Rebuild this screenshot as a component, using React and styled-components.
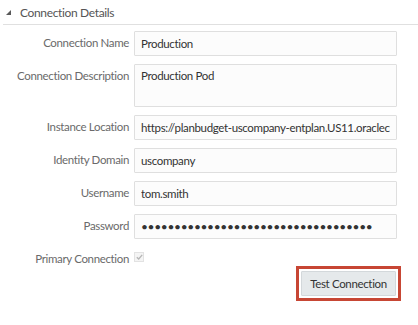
import React from 'react';
import styled, { createGlobalStyle } from 'styled-components';

const GlobalStyle = createGlobalStyle`
  html, body {
    margin: 0;
    padding: 0;
    background: #fff;
  }
  body {
    font-family: Lato, "Liberation Sans", sans-serif;
    font-size: 11.5px;
    letter-spacing: -0.35px;
  }
`;

const Panel = styled.div`
  width: 418px;
  height: 325px;
  overflow: hidden;
`;

const SectionHeader = styled.div`
  display: flex;
  align-items: center;
  gap: 9px;
  height: 25px;
  margin-left: 3px;
  padding-left: 3px;
  border-bottom: 1px solid #e0e0e0;
  color: #555;
  font-size: 12px;
  box-sizing: border-box;
`;

const Caret = styled.span`
  display: inline-block;
  width: 0;
  height: 0;
  border-left: 5px solid transparent;
  border-bottom: 5px solid #595959;
  margin-top: 1px;
`;

const Form = styled.div`
  display: grid;
  grid-template-columns: 129px 263px;
  column-gap: 5px;
  row-gap: 8px;
  margin-top: 6px;
`;

const Label = styled.label`
  text-align: right;
  color: #6a6a6a;
  line-height: ${(p) => (p.$short ? '20px' : '24px')};
  white-space: nowrap;
`;

const Field = styled.input`
  box-sizing: border-box;
  width: 100%;
  height: 25px;
  margin: 0;
  padding: 0 6px;
  border: 1px solid #dfdfdf;
  border-radius: 1px;
  background: #fcfcfc;
  color: #333;
  font: inherit;
  letter-spacing: inherit;
  font-size: ${(p) => (p.type === 'password' ? '12px' : '11.5px')};
  outline: none;
`;

const Area = styled.textarea`
  box-sizing: border-box;
  width: 100%;
  height: 43px;
  margin: 0;
  padding: 4px 6px;
  border: 1px solid #dfdfdf;
  border-radius: 1px;
  background: #fcfcfc;
  color: #333;
  font: inherit;
  letter-spacing: inherit;
  resize: none;
  outline: none;
`;

const CheckCell = styled.div`
  display: flex;
  align-items: center;
  height: 20px;
`;

const CheckBox = styled.span`
  display: inline-flex;
  align-items: center;
  justify-content: center;
  width: 8px;
  height: 8px;
  border: 1px solid #e2e2e2;
  background: #f4f4f4;
`;

const CheckRow = styled(Label)`
  margin-top: 2px;
`;

const Actions = styled.div`
  display: flex;
  justify-content: flex-end;
  width: 401px;
  margin-top: -3px;
`;

const Highlight = styled.div`
  display: flex;
  padding: 2px;
  border: 3px solid #c74634;
`;

const Button = styled.button`
  box-sizing: border-box;
  width: 95px;
  height: 25px;
  padding: 0;
  border: 1px solid #d3d8db;
  border-radius: 1px;
  background: #e5e9eb;
  color: #333;
  font: inherit;
  letter-spacing: inherit;
`;

export default function App() {
  return (
    <Panel>
      <GlobalStyle />
      <SectionHeader>
        <Caret />
        Connection Details
      </SectionHeader>
      <Form>
        <Label>Connection Name</Label>
        <Field defaultValue="Production" />
        <Label>Connection Description</Label>
        <Area defaultValue="Production Pod" />
        <Label>Instance Location</Label>
        <Field defaultValue="https://planbudget-uscompany-entplan.US11.oraclecloud.com" />
        <Label>Identity Domain</Label>
        <Field defaultValue="uscompany" />
        <Label>Username</Label>
        <Field defaultValue="tom.smith" />
        <Label>Password</Label>
        <Field type="password" defaultValue="passwordpasswordpasswordpasswordpas" />
        <CheckRow $short>Primary Connection</CheckRow>
        <CheckCell>
          <CheckBox>
            <svg width="7" height="6" viewBox="0 0 7 6">
              <path d="M0.8 3.2 L2.7 5 L6.2 0.8" fill="none" stroke="#b5b5b5" strokeWidth="1.3" />
            </svg>
          </CheckBox>
        </CheckCell>
      </Form>
      <Actions>
        <Highlight>
          <Button>Test Connection</Button>
        </Highlight>
      </Actions>
    </Panel>
  );
}
